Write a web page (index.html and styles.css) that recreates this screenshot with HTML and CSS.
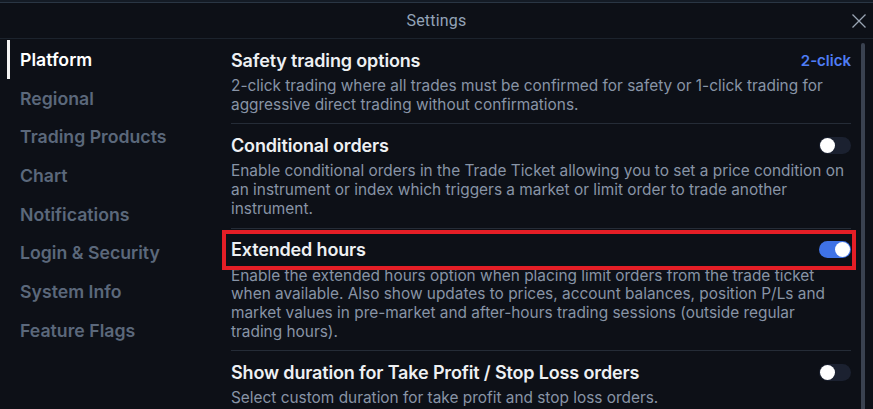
FILE: index.html
```html
<!DOCTYPE html>
<html lang="en">
<head>
<meta charset="utf-8">
<title>Settings</title>
<link rel="stylesheet" href="styles.css">
</head>
<body>
<div class="behind"></div>
<div class="dialog">
  <header class="dialog-header">
    <span class="dialog-title">Settings</span>
    <button class="close" aria-label="Close">
      <svg width="16" height="16" viewBox="0 0 16 16"><path d="M1.5 1.5 L14.5 14.5 M14.5 1.5 L1.5 14.5" stroke="#9aa5b4" stroke-width="1.3" fill="none"/></svg>
    </button>
  </header>
  <div class="dialog-body">
    <nav class="sidebar">
      <a class="nav-item active">Platform</a>
      <a class="nav-item">Regional</a>
      <a class="nav-item">Trading Products</a>
      <a class="nav-item">Chart</a>
      <a class="nav-item">Notifications</a>
      <a class="nav-item">Login &amp; Security</a>
      <a class="nav-item">System Info</a>
      <a class="nav-item">Feature Flags</a>
    </nav>
    <main class="content">
      <section class="setting">
        <div class="setting-head">
          <h3 class="setting-title">Safety trading options</h3>
          <span class="link-value">2-click</span>
        </div>
        <p class="setting-desc">2-click trading where all trades must be confirmed for safety or 1-click trading for aggressive direct trading without confirmations.</p>
      </section>
      <section class="setting">
        <div class="setting-head">
          <h3 class="setting-title">Conditional orders</h3>
          <span class="toggle"></span>
        </div>
        <p class="setting-desc">Enable conditional orders in the Trade Ticket allowing you to set a price condition on an instrument or index which triggers a market or limit order to trade another instrument.</p>
      </section>
      <section class="setting">
        <div class="setting-head highlighted">
          <h3 class="setting-title">Extended hours</h3>
          <span class="toggle on"></span>
        </div>
        <p class="setting-desc">Enable the extended hours option when placing limit orders from the trade ticket when available. Also show updates to prices, account balances, position P/Ls and market values in pre-market and after-hours trading sessions (outside regular trading hours).</p>
      </section>
      <section class="setting">
        <div class="setting-head">
          <h3 class="setting-title">Show duration for Take Profit / Stop Loss orders</h3>
          <span class="toggle"></span>
        </div>
        <p class="setting-desc">Select custom duration for take profit and stop loss orders.</p>
      </section>
    </main>
    <div class="scrollbar"><div class="thumb"></div></div>
  </div>
</div>
</body>
</html>
```

FILE: styles.css
```css
* { box-sizing: border-box; }
html, body {
  margin: 0;
  padding: 0;
  height: 100%;
  overflow: hidden;
  background: #0d1017;
}
body {
  font-family: Inter, "Noto Sans", sans-serif;
}
.behind {
  height: 2px;
  background: #141b25;
}
.dialog {
  border-top: 1px solid #2a3644;
  background: #0d1017;
}
.dialog-header {
  height: 36px;
  border-bottom: 1px solid #1c232d;
  display: flex;
  align-items: center;
  justify-content: center;
  position: relative;
}
.dialog-title {
  font-family: Roboto, "Liberation Sans", sans-serif;
  font-size: 16px;
  color: #93a3b8;
  letter-spacing: 0.2px;
}
.close {
  position: absolute;
  right: 6px;
  top: 10px;
  background: none;
  border: 0;
  padding: 0;
  width: 16px;
  height: 16px;
  display: flex;
}
.dialog-body {
  display: flex;
  height: 370px;
}
.sidebar {
  width: 220px;
  padding: 1px 0 0 7px;
  display: flex;
  flex-direction: column;
}
.nav-item {
  height: 38.7px;
  display: flex;
  align-items: center;
  padding-left: 10px;
  font-size: 17.7px;
  font-weight: 600;
  color: #5b687b;
  border-left: 3px solid transparent;
}
.nav-item.active {
  color: #ffffff;
  border-left-color: #f2f2f2;
}
.content {
  flex: 1;
  padding: 0 0 0 11px;
}
.setting {
  border-bottom: 1px solid #252c37;
  padding: 9px 0 9px;
}
.setting-head {
  height: 24px;
  display: flex;
  align-items: center;
  justify-content: space-between;
  position: relative;
}
.setting-title {
  margin: 0;
  font-size: 18px;
  font-weight: 600;
  color: #eef0f3;
  letter-spacing: -0.15px;
}
.link-value {
  font-size: 15px;
  font-weight: 600;
  color: #4f7df5;
}
.setting-desc {
  margin: 5px 0 0;
  padding-right: 4px;
  font-size: 15.4px;
  line-height: 18.7px;
  color: #8894a6;
}
.toggle {
  width: 32px;
  height: 17px;
  border-radius: 9px;
  background: #1b2130;
  position: relative;
  flex: none;
}
.toggle::after {
  content: "";
  position: absolute;
  left: 1px;
  top: 1px;
  width: 15px;
  height: 15px;
  border-radius: 50%;
  background: #ffffff;
}
.toggle.on { background: #3f72e6; }
.toggle.on::after { left: 16px; }
.highlighted::before {
  content: "";
  position: absolute;
  left: -9px;
  right: -5px;
  top: -8px;
  bottom: -8px;
  border: 4px solid #e41e26;
  pointer-events: none;
}
.scrollbar {
  width: 22px;
  padding: 4px 0 0 10px;
}
.thumb {
  width: 4px;
  height: 100%;
  background: #3a4250;
  border-radius: 2px 2px 0 0;
}
```
